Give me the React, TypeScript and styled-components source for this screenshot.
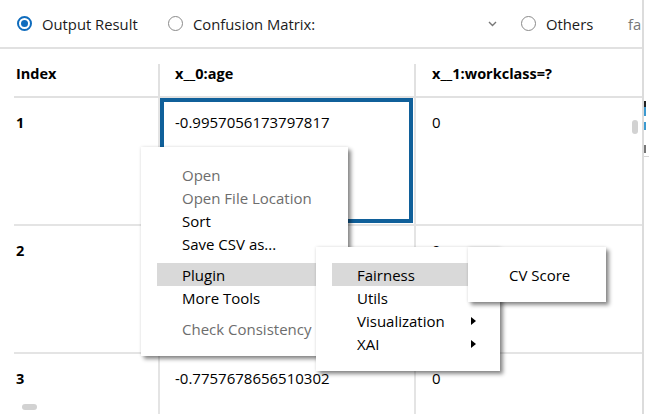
import React from "react";
import styled, { createGlobalStyle } from "styled-components";

const GlobalStyle = createGlobalStyle`
  html, body { margin: 0; padding: 0; background: #fff; }
  body {
    font-family: "Open Sans", "Noto Sans", sans-serif;
    color: #000;
    overflow: hidden;
  }
  * { box-sizing: border-box; }
`;

const Page = styled.div`
  position: relative;
  width: 649px;
  height: 414px;
  overflow: hidden;
  display: flex;
  font-size: 15px;
`;

const MainPanel = styled.div`
  width: 644px;
  flex: none;
  border-right: 2px solid #dcdcdc;
  display: flex;
  flex-direction: column;
  overflow: hidden;
`;

const SidePanel = styled.div`
  flex: 1;
  display: flex;
  flex-direction: column;
  padding-top: 101px;
`;

const SideMark = styled.div<{ $color: string; $h: number; $mt: number }>`
  width: 2px;
  height: ${(p) => p.$h}px;
  margin-top: ${(p) => p.$mt}px;
  background: ${(p) => p.$color};
`;

const SideRule = styled.div`
  margin-top: 3px;
  height: 1px;
  background: #d6d6d6;
`;

const Toolbar = styled.div`
  height: 49px;
  flex: none;
  border-bottom: 2px solid #e1e1e1;
  display: flex;
  align-items: center;
  padding-left: 17px;
  white-space: nowrap;
  color: #1b1b1b;
  font-size: 14.8px;
`;

const RadioOption = styled.label<{ $w: number }>`
  display: flex;
  align-items: center;
  gap: 10px;
  width: ${(p) => p.$w}px;
  flex: none;
`;

const RadioCircle = styled.span<{ $checked?: boolean }>`
  width: 15px;
  height: 15px;
  border-radius: 50%;
  flex: none;
  border: ${(p) => (p.$checked ? "2px solid #0f6cbd" : "1.5px solid #8a8a8a")};
  display: flex;
  align-items: center;
  justify-content: center;
  &::after {
    content: "";
    width: 7px;
    height: 7px;
    border-radius: 50%;
    background: ${(p) => (p.$checked ? "#0f6cbd" : "transparent")};
  }
`;

const DropdownSelect = styled.span`
  flex: 1;
  display: flex;
  justify-content: flex-end;
  align-items: center;
  padding-right: 24px;
  color: #777;
`;

const FadedText = styled.span`
  color: #777;
`;

const Table = styled.div`
  margin-left: 14px;
  display: flex;
  flex-direction: column;
`;

const HeaderRow = styled.div`
  display: grid;
  grid-template-columns: 144px 256px 1fr;
  height: 49px;
  align-items: end;
  border-bottom: 2px solid #e1e1e1;
`;

const HeaderCell = styled.div<{ $pad: number; $sep?: boolean }>`
  height: 32px;
  line-height: 20px;
  font-size: 14.5px;
  font-weight: 700;
  padding-left: ${(p) => p.$pad}px;
  border-left: ${(p) => (p.$sep ? "2px solid #e1e1e1" : "none")};
  white-space: nowrap;
`;

const BodyRow = styled.div`
  display: grid;
  grid-template-columns: 144px 256px 1fr;
  height: 128px;
  flex: none;
  border-bottom: 2px solid #e4e4e4;
`;

const IndexCell = styled.div`
  padding: 14px 2px 0;
  line-height: 21px;
  font-size: 14.5px;
  font-weight: 700;
`;

const ValueCell = styled.div<{ $pad: number; $selected?: boolean }>`
  padding: 14px 0 0 ${(p) => p.$pad}px;
  line-height: 21px;
  border-left: 2px solid #e4e4e4;
  white-space: nowrap;
  overflow: hidden;
  box-shadow: ${(p) =>
    p.$selected
      ? "inset -1px -1px 0 #fff, inset 4px 4px 0 #10609a, inset -5px -5px 0 #10609a"
      : "none"};
`;

const ScrollThumb = styled.div<{ $x: number; $y: number; $w: number; $h: number }>`
  position: absolute;
  left: ${(p) => p.$x}px;
  top: ${(p) => p.$y}px;
  width: ${(p) => p.$w}px;
  height: ${(p) => p.$h}px;
  border-radius: 3px;
  background: #d2d2d2;
`;

const Menu = styled.div<{ $x: number; $y: number; $w: number }>`
  position: absolute;
  left: ${(p) => p.$x}px;
  top: ${(p) => p.$y}px;
  width: ${(p) => p.$w}px;
  background: #fff;
  padding: 16px;
  box-shadow: 3px 3px 4px rgba(0, 0, 0, 0.45), 0 0 3px rgba(0, 0, 0, 0.12);
`;

const MenuItem = styled.div<{ $disabled?: boolean; $active?: boolean }>`
  height: 23px;
  line-height: 23px;
  padding: 1px 8px 0 25px;
  display: flex;
  align-items: center;
  justify-content: space-between;
  white-space: nowrap;
  color: ${(p) => (p.$disabled ? "#6d6d6d" : "#000")};
  background: ${(p) => (p.$active ? "#d9d9d9" : "transparent")};
`;

const MenuSeparator = styled.div`
  height: 8px;
`;

const Chevron = () => (
  <svg width="9" height="6" viewBox="0 0 9 6">
    <polyline points="1,1 4.5,4.5 8,1" fill="none" stroke="#777" strokeWidth="1.4" />
  </svg>
);

const SubArrow = () => (
  <svg width="5" height="8" viewBox="0 0 5 8">
    <polygon points="0,0 5,4 0,8" fill="#000" />
  </svg>
);

export default function App() {
  return (
    <>
      <GlobalStyle />
      <Page>
        <MainPanel>
          <Toolbar>
            <RadioOption $w={151}>
              <RadioCircle $checked />
              Output Result
            </RadioOption>
            <RadioOption $w={353}>
              <RadioCircle />
              Confusion Matrix:
              <DropdownSelect>
                <Chevron />
              </DropdownSelect>
            </RadioOption>
            <RadioOption $w={107}>
              <RadioCircle />
              Others
            </RadioOption>
            <FadedText>fa</FadedText>
          </Toolbar>
          <Table>
            <HeaderRow>
              <HeaderCell $pad={2}>Index</HeaderCell>
              <HeaderCell $pad={15} $sep>
                x__0:age
              </HeaderCell>
              <HeaderCell $pad={16} $sep>
                x__1:workclass=?
              </HeaderCell>
            </HeaderRow>
            <BodyRow>
              <IndexCell>1</IndexCell>
              <ValueCell $pad={15} $selected>
                -0.9957056173797817
              </ValueCell>
              <ValueCell $pad={16}>0</ValueCell>
            </BodyRow>
            <BodyRow>
              <IndexCell>2</IndexCell>
              <ValueCell $pad={15} />
              <ValueCell $pad={16}>0</ValueCell>
            </BodyRow>
            <BodyRow>
              <IndexCell>3</IndexCell>
              <ValueCell $pad={15}>-0.7757678656510302</ValueCell>
              <ValueCell $pad={16}>0</ValueCell>
            </BodyRow>
          </Table>
        </MainPanel>
        <SidePanel>
          <SideMark $color="#222" $h={6} $mt={0} />
          <SideMark $color="#3c9ad0" $h={9} $mt={0} />
          <SideMark $color="#3c9ad0" $h={8} $mt={6} />
          <SideMark $color="#777" $h={8} $mt={15} />
          <SideRule />
        </SidePanel>

        <ScrollThumb $x={632} $y={120} $w={6} $h={14} />
        <ScrollThumb $x={22} $y={404} $w={15} $h={6} />

        <Menu $x={141} $y={147} $w={207}>
          <MenuItem $disabled>Open</MenuItem>
          <MenuItem $disabled>Open File Location</MenuItem>
          <MenuItem>Sort</MenuItem>
          <MenuItem>Save CSV as...</MenuItem>
          <MenuSeparator />
          <MenuItem $active>Plugin</MenuItem>
          <MenuItem>More Tools</MenuItem>
          <MenuSeparator />
          <MenuItem $disabled>Check Consistency</MenuItem>
        </Menu>

        <Menu $x={316} $y={247} $w={184}>
          <MenuItem $active>Fairness</MenuItem>
          <MenuItem>Utils</MenuItem>
          <MenuItem>
            Visualization
            <SubArrow />
          </MenuItem>
          <MenuItem>
            XAI
            <SubArrow />
          </MenuItem>
        </Menu>

        <Menu $x={468} $y={247} $w={138}>
          <MenuItem>CV Score</MenuItem>
        </Menu>
      </Page>
    </>
  );
}
